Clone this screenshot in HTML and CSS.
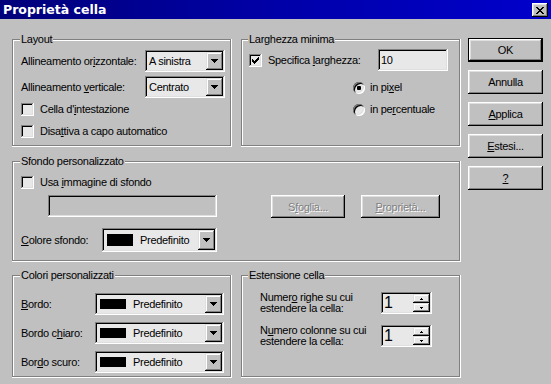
FILE: index.html
```html
<!DOCTYPE html>
<html lang="it">
<head>
    <meta charset="UTF-8">
    <meta name="viewport" content="width=device-width, initial-scale=1.0">
    <title>Proprietà cella</title>
    <link rel="stylesheet" href="styles.css">
</head>
<body>
    <div class="dialog">
        <div class="titlebar">
            <span class="title">Proprietà cella</span>
            <span class="close-btn">
                <svg width="8" height="7" viewBox="0 0 8 7" shape-rendering="crispEdges"><path d="M0 0h2v1H0zM6 0h2v1H6zM1 1h2v1H1zM5 1h2v1H5zM2 2h4v1H2zM3 3h2v1H3zM2 4h4v1H2zM1 5h2v1H1zM5 5h2v1H5zM0 6h2v1H0zM6 6h2v1H6z"/></svg>
            </span>
        </div>

        <div class="content">
            <div class="panels">
                <div class="row row-1">
                    <div class="group half">
                        <div class="group-title">Layout</div>
                        <div class="line mt4">
                            <span class="lbl lbl-align">Allineamento or<u>i</u>zzontale:</span>
                            <div class="combo combo-align">
                                <span class="combo-text">A sinistra</span>
                                <span class="drop"><svg width="7" height="4" viewBox="0 0 7 4" shape-rendering="crispEdges"><path d="M0 0h7v1H0zM1 1h5v1H1zM2 2h3v1H2zM3 3h1v1H3z"/></svg></span>
                            </div>
                        </div>
                        <div class="line mt4">
                            <span class="lbl lbl-align">Allineamento <u>v</u>erticale:</span>
                            <div class="combo combo-align">
                                <span class="combo-text">Centrato</span>
                                <span class="drop"><svg width="7" height="4" viewBox="0 0 7 4" shape-rendering="crispEdges"><path d="M0 0h7v1H0zM1 1h5v1H1zM2 2h3v1H2zM3 3h1v1H3z"/></svg></span>
                            </div>
                        </div>
                        <div class="check-line mt5">
                            <span class="check"></span>
                            <span class="check-lbl">Cella d'<u>i</u>ntestazione</span>
                        </div>
                        <div class="check-line mt9">
                            <span class="check"></span>
                            <span class="check-lbl">Disa<u>t</u>tiva a capo automatico</span>
                        </div>
                    </div>

                    <div class="group half right">
                        <div class="group-title">Larghezza minima</div>
                        <div class="line mt3">
                            <span class="check"><svg width="7" height="7" viewBox="0 0 7 7" shape-rendering="crispEdges"><path d="M6 0h1v1H6zM5 1h2v1H5zM0 2h1v1H0zM4 2h3v1H4zM0 3h2v1H0zM3 3h3v1H3zM0 4h5v1H0zM1 5h3v1H1zM2 6h1v1H2z"/></svg></span>
                            <span class="check-lbl lbl-width">Specifica <u>l</u>arghezza:</span>
                            <div class="field field-width">10</div>
                        </div>
                        <div class="radio-line mt10">
                            <span class="radio on"></span>
                            <span class="radio-lbl">in pi<u>x</u>el</span>
                        </div>
                        <div class="radio-line mt9">
                            <span class="radio"></span>
                            <span class="radio-lbl">in pe<u>r</u>centuale</span>
                        </div>
                    </div>
                </div>

                <div class="row row-2">
                    <div class="group full">
                        <div class="group-title">Sfondo personalizzato</div>
                        <div class="check-line mt8">
                            <span class="check"></span>
                            <span class="check-lbl">Usa <u>i</u>mmagine di sfondo</span>
                        </div>
                        <div class="browse-line">
                            <div class="field field-image"></div>
                            <span class="btn btn-disabled btn-browse">S<u>f</u>oglia...</span>
                            <span class="btn btn-disabled btn-props"><u>P</u>roprietà...</span>
                        </div>
                        <div class="line line-bg">
                            <span class="lbl lbl-bg"><u>C</u>olore sfondo:</span>
                            <div class="combo combo-color combo-bg">
                                <span class="swatch"></span>
                                <span class="combo-text">Predefinito</span>
                                <span class="drop"><svg width="7" height="4" viewBox="0 0 7 4" shape-rendering="crispEdges"><path d="M0 0h7v1H0zM1 1h5v1H1zM2 2h3v1H2zM3 3h1v1H3z"/></svg></span>
                            </div>
                        </div>
                    </div>
                </div>

                <div class="row row-3">
                    <div class="group half">
                        <div class="group-title">Colori personalizzati</div>
                        <div class="line mt11">
                            <span class="lbl lbl-border"><u>B</u>ordo:</span>
                            <div class="combo combo-color combo-border">
                                <span class="swatch"></span>
                                <span class="combo-text">Predefinito</span>
                                <span class="drop"><svg width="7" height="4" viewBox="0 0 7 4" shape-rendering="crispEdges"><path d="M0 0h7v1H0zM1 1h5v1H1zM2 2h3v1H2zM3 3h1v1H3z"/></svg></span>
                            </div>
                        </div>
                        <div class="line mt7">
                            <span class="lbl lbl-border">Bordo c<u>h</u>iaro:</span>
                            <div class="combo combo-color combo-border">
                                <span class="swatch"></span>
                                <span class="combo-text">Predefinito</span>
                                <span class="drop"><svg width="7" height="4" viewBox="0 0 7 4" shape-rendering="crispEdges"><path d="M0 0h7v1H0zM1 1h5v1H1zM2 2h3v1H2zM3 3h1v1H3z"/></svg></span>
                            </div>
                        </div>
                        <div class="line mt7">
                            <span class="lbl lbl-border">Bor<u>d</u>o scuro:</span>
                            <div class="combo combo-color combo-border">
                                <span class="swatch"></span>
                                <span class="combo-text">Predefinito</span>
                                <span class="drop"><svg width="7" height="4" viewBox="0 0 7 4" shape-rendering="crispEdges"><path d="M0 0h7v1H0zM1 1h5v1H1zM2 2h3v1H2zM3 3h1v1H3z"/></svg></span>
                            </div>
                        </div>
                    </div>

                    <div class="group half right">
                        <div class="group-title">Estensione cella</div>
                        <div class="line mt10">
                            <span class="spin-lbl">Numer<u>o</u> righe su cui<br>estendere la cella:</span>
                            <div class="spin">
                                <span class="spin-value">1</span>
                                <span class="spin-btns">
                                    <span class="spin-btn"><svg width="3" height="2" viewBox="0 0 3 2" shape-rendering="crispEdges"><path d="M1 0h1v1H1zM0 1h3v1H0z"/></svg></span>
                                    <span class="spin-btn"><svg width="3" height="2" viewBox="0 0 3 2" shape-rendering="crispEdges"><path d="M0 0h3v1H0zM1 1h1v1H1z"/></svg></span>
                                </span>
                            </div>
                        </div>
                        <div class="line mt11">
                            <span class="spin-lbl">N<u>u</u>mero colonne su cui<br>estendere la cella:</span>
                            <div class="spin">
                                <span class="spin-value">1</span>
                                <span class="spin-btns">
                                    <span class="spin-btn"><svg width="3" height="2" viewBox="0 0 3 2" shape-rendering="crispEdges"><path d="M1 0h1v1H1zM0 1h3v1H0z"/></svg></span>
                                    <span class="spin-btn"><svg width="3" height="2" viewBox="0 0 3 2" shape-rendering="crispEdges"><path d="M0 0h3v1H0zM1 1h1v1H1z"/></svg></span>
                                </span>
                            </div>
                        </div>
                    </div>
                </div>
            </div>

            <div class="side">
                <span class="btn btn-default">OK</span>
                <span class="btn">Annulla</span>
                <span class="btn"><u>A</u>pplica</span>
                <span class="btn"><u>E</u>stesi...</span>
                <span class="btn"><u>?</u></span>
            </div>
        </div>
    </div>
</body>
</html>
```

FILE: styles.css
```css
* {
    box-sizing: border-box;
}
body {
    margin: 0;
    background: #c0c0c0;
    font-family: "Liberation Sans", Arial, sans-serif;
    font-size: 11px;
    letter-spacing: -0.3px;
    color: #000;
}
u {
    text-underline-offset: 1px;
}
svg {
    display: block;
}
.dialog {
    width: 551px;
    height: 384px;
    background: #c0c0c0;
    overflow: hidden;
}

/* barra del titolo */
.titlebar {
    height: 19px;
    display: flex;
    justify-content: space-between;
    align-items: flex-start;
    padding: 0 3px;
    background: linear-gradient(to right, #00007a, #0000a8 50%, #0000cc);
    color: #fff;
}
.title {
    font-family: "DejaVu Sans", sans-serif;
    font-weight: bold;
    font-size: 12.5px;
    letter-spacing: 0;
    line-height: 16px;
    margin-top: 2px;
}
.close-btn {
    width: 16px;
    height: 14px;
    margin-top: 3px;
    display: flex;
    align-items: center;
    justify-content: center;
    background: #c0c0c0;
    box-shadow: inset -1px -1px #000, inset 1px 1px #fff, inset -2px -2px #808080, inset 2px 2px #dfdfdf;
}

/* struttura */
.content {
    display: flex;
    padding-left: 12px;
}
.panels {
    width: 449px;
}
.side {
    margin-left: 7px;
    padding-top: 19px;
    display: flex;
    flex-direction: column;
    gap: 8px;
}
.row {
    display: flex;
    gap: 9px;
}
.row-1 { margin-top: 20px; height: 108px; }
.row-2 { margin-top: 14px; height: 101px; }
.row-3 { margin-top: 13px; height: 103px; }

.group {
    padding-left: 9px;
    box-shadow: inset -1px -1px #fff, inset -2px -2px #808080, inset 1px 1px #808080, inset 2px 2px #fff;
}
.group.right {
    padding-left: 8px;
}
.half { width: 220px; }
.full { width: 449px; }
.group-title {
    width: fit-content;
    margin: -6px 0 0 -1px;
    padding: 0 1px;
    background: #c0c0c0;
    line-height: 13px;
}

.mt3 { margin-top: 3px; }
.mt4 { margin-top: 4px; }
.mt5 { margin-top: 5px; }
.mt7 { margin-top: 7px; }
.mt8 { margin-top: 8px; }
.mt9 { margin-top: 9px; }
.mt10 { margin-top: 10px; }
.mt11 { margin-top: 11px; }

.line {
    display: flex;
    align-items: center;
    height: 22px;
}
.check-line, .radio-line {
    display: flex;
    align-items: center;
    height: 13px;
    line-height: 13px;
}
.radio-line {
    padding-left: 104px;
}
.lbl-align { width: 124px; }
.lbl-bg { width: 81px; }
.lbl-border { width: 74px; }
.check-lbl { margin-left: 6px; }
.lbl-width { width: 110px; }
.radio-lbl { margin-left: 5px; }

/* controlli */
.check {
    width: 13px;
    height: 13px;
    flex: none;
    display: flex;
    align-items: center;
    justify-content: center;
    background: #e8e8e8;
    box-shadow: inset -1px -1px #fff, inset 1px 1px #808080, inset -2px -2px #dfdfdf, inset 2px 2px #000;
}
.radio {
    width: 12px;
    height: 12px;
    flex: none;
    border-radius: 50%;
    display: flex;
    align-items: center;
    justify-content: center;
    background: #e8e8e8;
    box-shadow: inset 1px 1px #808080, inset -1px -1px #fff, inset 2px 2px #000, inset -2px -2px #dfdfdf;
}
.radio.on::after {
    content: "";
    width: 4px;
    height: 4px;
    border-radius: 1px;
    background: #000;
}
.field {
    height: 22px;
    padding: 2px 3px;
    line-height: 18px;
    background: #e8e8e8;
    box-shadow: inset -1px -1px #fff, inset 1px 1px #808080, inset -2px -2px #dfdfdf, inset 2px 2px #000;
}
.field-width { width: 70px; }
.field-image {
    width: 169px;
    margin-left: 27px;
    background: #c0c0c0;
}
.combo {
    display: flex;
    height: 22px;
    padding: 2px;
    background: #e8e8e8;
    box-shadow: inset -1px -1px #fff, inset 1px 1px #808080, inset -2px -2px #dfdfdf, inset 2px 2px #000;
}
.combo-align { width: 80px; }
.combo-text {
    flex: 1;
    padding-left: 2px;
    line-height: 18px;
}
.drop {
    width: 17px;
    display: flex;
    align-items: center;
    justify-content: center;
    background: #c0c0c0;
    box-shadow: inset -1px -1px #000, inset 1px 1px #dfdfdf, inset -2px -2px #808080, inset 2px 2px #fff;
}
.combo-color .combo-text { padding-left: 7px; }
.swatch {
    width: 26px;
    height: 10px;
    margin: auto 0 auto 3px;
    background: #000;
}
.combo-bg { width: 115px; height: 24px; }
.combo-bg .combo-text { line-height: 20px; }
.combo-bg .swatch { height: 12px; }
.combo-border { width: 129px; }

.browse-line {
    display: flex;
    margin-top: 6px;
}
.line-bg { margin-top: 10px; height: 24px; }

.btn {
    width: 75px;
    height: 24px;
    display: flex;
    align-items: center;
    justify-content: center;
    background: #c0c0c0;
    box-shadow: inset -1px -1px #000, inset 1px 1px #fff, inset -2px -2px #808080, inset 2px 2px #dfdfdf;
}
.btn-default {
    border: 1px solid #000;
}
.btn-disabled {
    color: #808080;
    text-shadow: 1px 1px #fff;
    height: 23px;
}
.btn-browse { margin-left: 54px; width: 74px; }
.btn-props { margin-left: 16px; width: 79px; }

.spin-lbl {
    width: 121px;
    margin-left: 11px;
    line-height: 11px;
}
.spin {
    width: 51px;
    height: 22px;
    display: flex;
    padding: 2px;
    background: #e8e8e8;
    box-shadow: inset -1px -1px #fff, inset 1px 1px #808080, inset -2px -2px #dfdfdf, inset 2px 2px #000;
}
.spin-value {
    flex: 1;
    padding-left: 1px;
    font-size: 16px;
    line-height: 18px;
    letter-spacing: 0;
}
.spin-btns {
    width: 17px;
    display: flex;
    flex-direction: column;
}
.spin-btn {
    flex: 1;
    display: flex;
    align-items: center;
    justify-content: center;
    box-shadow: inset -1px -1px #000, inset 1px 1px #dfdfdf, inset -2px -2px #808080, inset 2px 2px #fff;
}
```
